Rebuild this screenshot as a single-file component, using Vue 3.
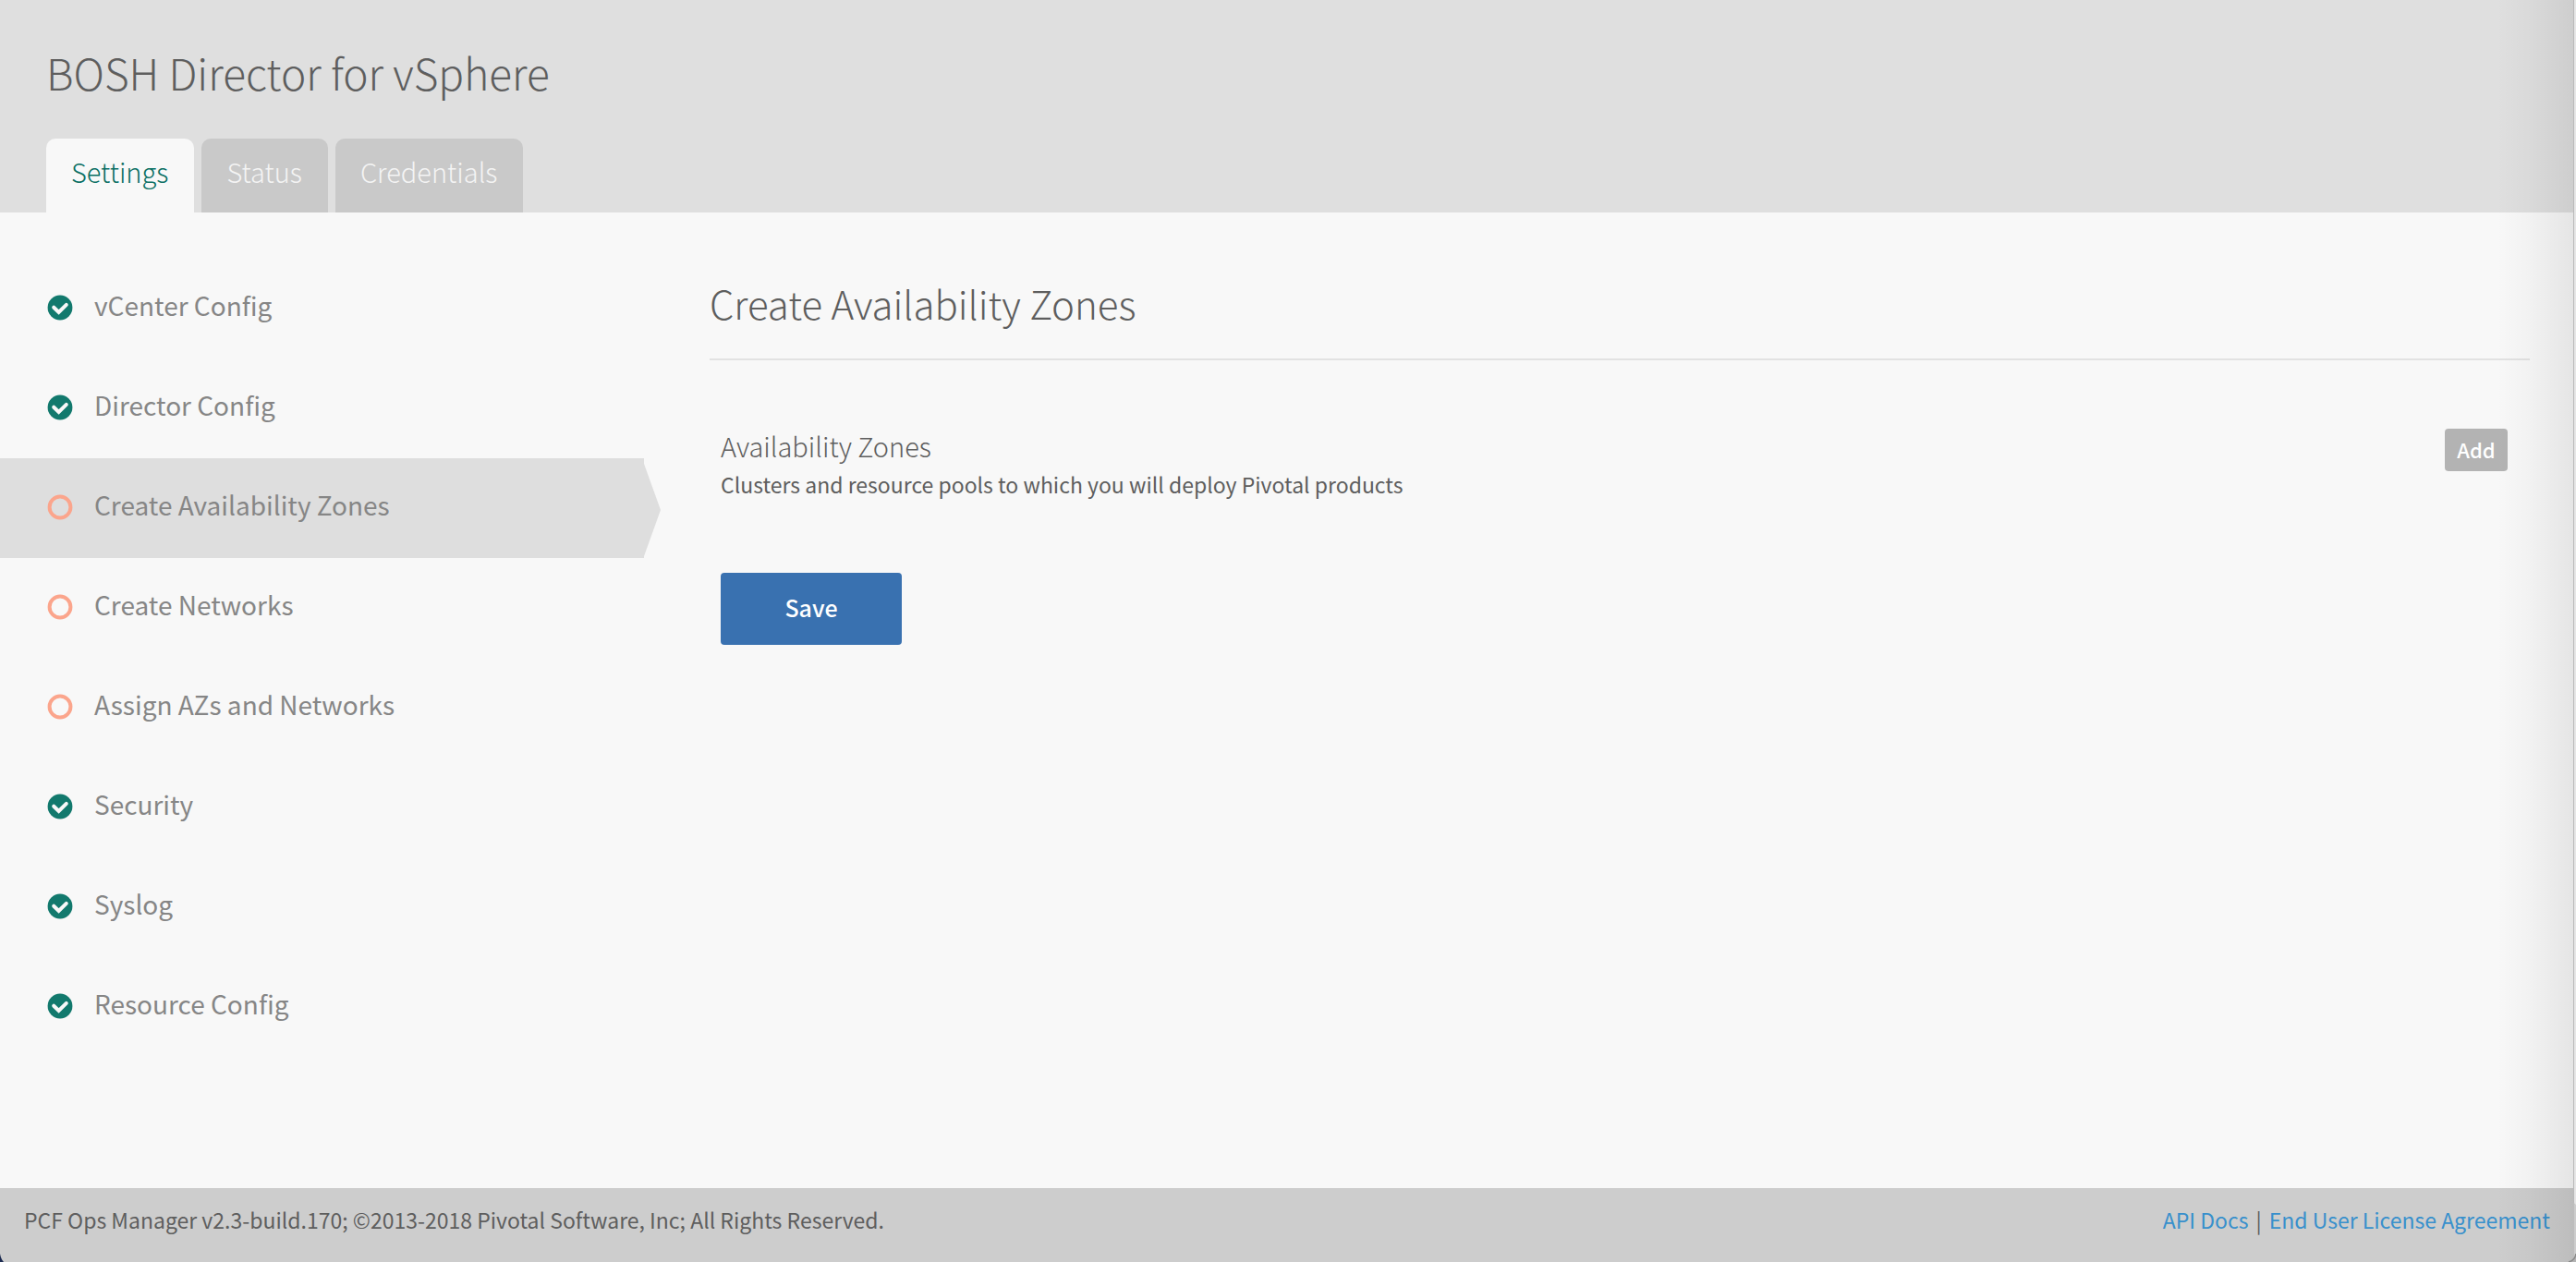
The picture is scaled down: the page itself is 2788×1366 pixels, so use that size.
<script setup>
const tabs = [
  { label: 'Settings', active: true },
  { label: 'Status', active: false },
  { label: 'Credentials', active: false },
]

const steps = [
  { label: 'vCenter Config', done: true },
  { label: 'Director Config', done: true },
  { label: 'Create Availability Zones', done: false, active: true },
  { label: 'Create Networks', done: false },
  { label: 'Assign AZs and Networks', done: false },
  { label: 'Security', done: true },
  { label: 'Syslog', done: true },
  { label: 'Resource Config', done: true },
]
</script>

<template>
  <div class="page">
    <header class="header">
      <h1 class="title">BOSH Director for vSphere</h1>
      <nav class="tabs" aria-label="Tile sections">
        <a
          v-for="tab in tabs"
          :key="tab.label"
          href="#"
          class="tab"
          :class="{ 'tab-active': tab.active }"
        >{{ tab.label }}</a>
      </nav>
    </header>

    <div class="body">
      <nav class="steps" aria-label="Configuration steps">
        <a
          v-for="step in steps"
          :key="step.label"
          href="#"
          class="step"
          :class="{ 'step-active': step.active }"
        >
          <svg v-if="step.done" class="icon" viewBox="0 0 28 28" aria-hidden="true">
            <circle cx="14" cy="14" r="13.4" fill="#12796d" />
            <path
              d="M7.2 13.7 L12.6 19 L20.8 10.8"
              fill="none"
              stroke="#f8f8f8"
              stroke-width="4"
              stroke-linecap="round"
              stroke-linejoin="miter"
            />
          </svg>
          <svg v-else class="icon" viewBox="0 0 28 28" aria-hidden="true">
            <circle cx="14" cy="14" r="11.4" fill="none" stroke="#fba58c" stroke-width="4" />
          </svg>
          <span class="step-label">{{ step.label }}</span>
          <svg v-if="step.active" class="arrow" viewBox="0 0 18 108" aria-hidden="true">
            <path d="M0 6 L18 56 L0 106 Z" fill="#dedede" />
          </svg>
        </a>
      </nav>

      <main class="main">
        <h2 class="heading">Create Availability Zones</h2>
        <form class="form" @submit.prevent>
          <div class="zones">
            <div>
              <h3 class="label">Availability Zones</h3>
              <p class="hint">Clusters and resource pools to which you will deploy Pivotal products</p>
            </div>
            <button type="button" class="add">Add</button>
          </div>
          <button type="submit" class="save">Save</button>
        </form>
      </main>
    </div>

    <footer class="footer">
      <span>PCF Ops Manager v2.3-build.170; ©2013-2018 Pivotal Software, Inc; All Rights Reserved.</span>
      <span class="links">
        <a href="#">API Docs</a>
        <span>|</span>
        <a href="#">End User License Agreement</a>
      </span>
    </footer>

    <div class="edge-shade"></div>
    <div class="edge-window"></div>
    <svg class="corner corner-left" viewBox="0 0 12 12" aria-hidden="true">
      <path d="M0 3 Q1 9 4 12 L0 12 Z" fill="#1c2a50" />
    </svg>
    <svg class="corner corner-right" viewBox="0 0 12 12" aria-hidden="true">
      <path d="M12 3 Q11 10 4 12 L12 12 Z" fill="#b4b4b4" />
      <path d="M12 3 Q11 10 4 12" fill="none" stroke="#8a8a8a" stroke-width="1.5" />
    </svg>
  </div>
</template>

<style>
body {
  margin: 0;
  background: #f8f8f8;
}
</style>

<style scoped>
.page {
  position: relative;
  display: flex;
  flex-direction: column;
  min-height: 100vh;
  overflow: hidden;
  background: #f8f8f8;
  color: #5e5e5e;
  font-family: "Noto Sans CJK SC", "Noto Sans", sans-serif;
  font-size: 23px;
  line-height: 36px;
  font-weight: 400;
}

a {
  text-decoration: none;
}

h1,
h2,
h3,
p {
  margin: 0;
}

.header {
  padding: 46px 50px 0;
  background: #dfdfdf;
}

.title {
  font-size: 46px;
  line-height: 64px;
  font-weight: 300;
}

.tabs {
  display: flex;
  gap: 8px;
  margin-top: 40px;
}

.tab {
  height: 80px;
  box-sizing: border-box;
  padding: 16px 28px 16px 27px;
  border-radius: 10px 10px 0 0;
  background: #c9c9c9;
  color: #f4f4f4;
  font-size: 29px;
  line-height: 38px;
  font-weight: 300;
}

.tab-active {
  background: #f8f8f8;
  color: #0a6f63;
}

.body {
  display: flex;
  flex: 1;
}

.steps {
  flex: 0 0 25%;
  padding-top: 50px;
}

.step {
  position: relative;
  display: flex;
  align-items: center;
  gap: 23px;
  height: 108px;
  box-sizing: border-box;
  padding: 0 0 2px 51px;
  color: #868686;
  font-size: 28px;
}

.step-label {
  padding-bottom: 6px;
}

.step-active {
  background: #dedede;
}

.icon {
  width: 28px;
  height: 28px;
}

.arrow {
  position: absolute;
  top: 0;
  left: 100%;
  width: 18px;
  height: 108px;
}

.main {
  flex: 1;
  padding: 68px 50px 0 71px;
}

.heading {
  padding-bottom: 30px;
  border-bottom: 2px solid #e2e2e2;
  font-size: 42px;
  line-height: 60px;
  font-weight: 300;
}

.form {
  padding: 74px 24px 0 12px;
}

.zones {
  display: flex;
  justify-content: space-between;
  align-items: flex-start;
}

.label {
  font-size: 29px;
  line-height: 36px;
  font-weight: 300;
}

.hint {
  padding-top: 4px;
  line-height: 40px;
}

button {
  border: 0;
  border-radius: 4px;
  color: #fff;
  font-family: inherit;
  font-weight: 500;
  cursor: pointer;
}

.add {
  width: 68px;
  height: 46px;
  padding: 0 0 2px;
  background: #b3b3b3;
  font-size: 22px;
}

.save {
  width: 196px;
  height: 78px;
  margin-top: 76px;
  padding: 0 0 4px;
  background: #3971b0;
  font-size: 25px;
}

.footer {
  display: flex;
  justify-content: space-between;
  box-sizing: border-box;
  height: 80px;
  padding: 16px 28px 16px 26px;
  background: #cdcdcd;
}

.links {
  display: flex;
  gap: 8px;
}

.links a {
  color: #3890cc;
}

/* Shade cast by the window that overlaps the right edge */
.edge-shade {
  position: absolute;
  top: 0;
  right: 2px;
  bottom: 0;
  width: 84px;
  background: linear-gradient(to right, rgba(0, 0, 0, 0), rgba(0, 0, 0, 0.025) 40%, rgba(0, 0, 0, 0.08));
  pointer-events: none;
}

.edge-window {
  position: absolute;
  top: 0;
  right: 0;
  bottom: 62px;
  width: 2px;
  border-left: 1px solid #b9b9b9;
  border-radius: 0 0 0 4px;
  background: #e6e6e6;
}

.corner {
  position: absolute;
  bottom: 0;
  width: 12px;
  height: 12px;
}

.corner-left {
  left: 0;
}

.corner-right {
  right: 0;
}
</style>
